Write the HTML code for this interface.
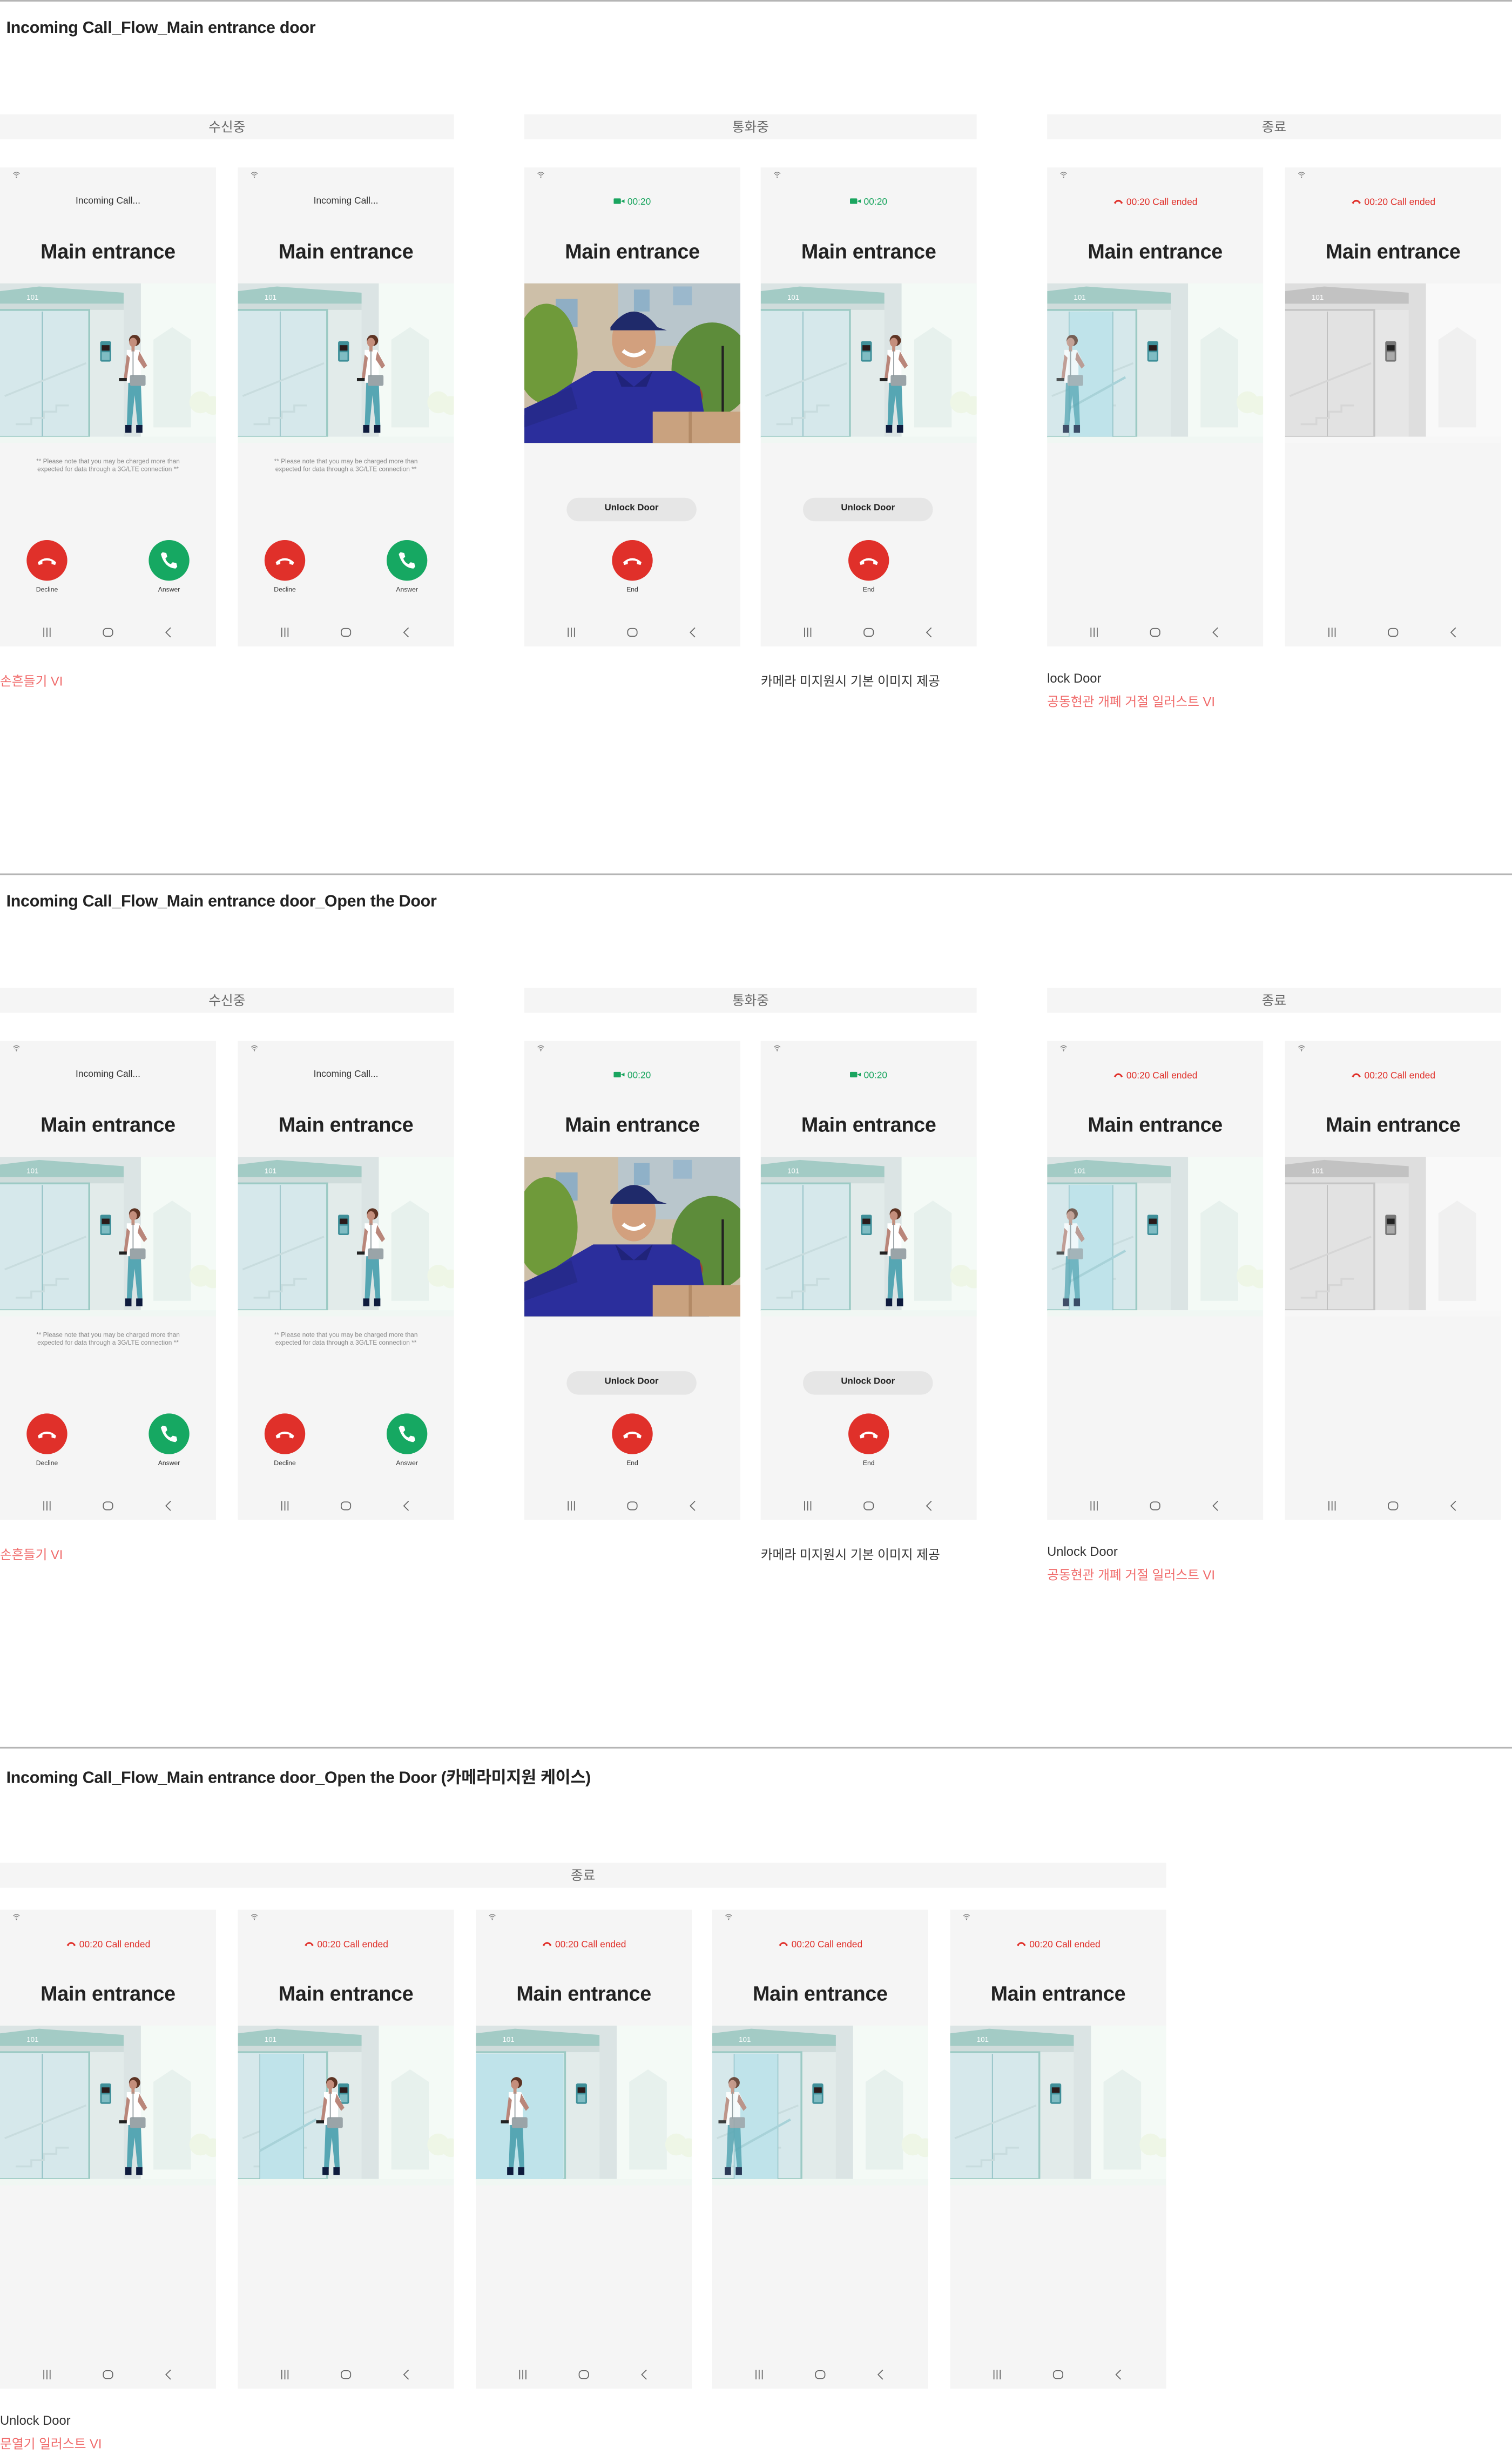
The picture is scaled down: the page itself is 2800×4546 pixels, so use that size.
<!DOCTYPE html>
<html><head><meta charset="utf-8">
<style>
html,body{margin:0;padding:0;background:#fff;}
body{width:2800px;height:4546px;overflow:hidden;position:relative;font-family:"Liberation Sans","Noto Sans CJK KR",sans-serif;}
#c{position:absolute;left:0;top:0;width:966px;height:1568px;transform:scale(2.8986);transform-origin:0 0;}
.sep{position:absolute;left:0;width:966px;height:0;border-top:0.5px solid #b5b5b5;}
.h{position:absolute;left:4px;font-size:10.5px;color:#222;font-weight:bold;white-space:nowrap;letter-spacing:-0.1px}
.band{position:absolute;height:16px;background:#f5f5f5;font-size:8.5px;color:#666;text-align:center;line-height:16px;}
.ph{position:absolute;width:138px;height:306px;background:#f5f5f5;overflow:hidden;}
.ph .wf{position:absolute;left:8px;top:2px;width:5px;height:5px}
.ph .tp{position:absolute;left:0;width:138px;top:19px;text-align:center;font-size:6px;color:#333;}
.ph .tp.g{color:#1aa55f}.ph .tp.r{color:#e0302a}
.ph .tt{position:absolute;left:0;width:138px;top:46px;text-align:center;font-size:13px;color:#222;font-weight:bold;letter-spacing:-0.1px}
.ph svg.im{position:absolute;left:0;top:74px;width:138px;height:102px}
.ph .nt{position:absolute;left:0;width:138px;top:186px;text-align:center;font-size:4.1px;color:#888;line-height:4.6px}
.ph .cb{position:absolute;width:26px;height:26px;border-radius:50%;top:238px}
.ph .cb svg{position:absolute;left:6px;top:6px;width:14px;height:14px}
.ph .lb{position:absolute;top:267px;width:40px;text-align:center;font-size:4.2px;color:#333}
.ph .pill{position:absolute;left:27px;top:211px;width:83px;height:15px;border-radius:8px;background:#e6e6e6;text-align:center;line-height:15px;font-size:5.8px;font-weight:bold;color:#222}
.red{background:#e0302a}.grn{background:#16a862}
.lab{position:absolute;font-size:8.2px;white-space:nowrap}
.lab.k{color:#333}.lab.rr{color:#f06a6a}
</style></head><body>
<svg width="0" height="0" style="position:absolute">
<defs>
<symbol id="man" viewBox="0 0 20 66">
<path d="M6 32h8l1 28h-3l-2-20-2 20H5z" fill="#56a6b3"/>
<rect x="4" y="59" width="4" height="5" fill="#0e1b3d"/><rect x="11" y="59" width="4" height="5" fill="#0e1b3d"/>
<path d="M5 11h8l3 6-2 1v14H5z" fill="#fff"/>
<path d="M13 12l5 9-2 2-4-6z" fill="#b9867a"/>
<rect x="8" y="2" width="2" height="10" fill="#c48e7c"/>
<circle cx="10" cy="5" r="3.6" fill="#5e3424"/><ellipse cx="9" cy="6.2" rx="2.5" ry="2.9" fill="#c48e7c"/>
<rect x="7" y="27" width="10" height="7" rx="1" fill="#9aa4a8"/>
<line x1="9" y1="11" x2="9" y2="28" stroke="#8a9498" stroke-width=".6"/>
<path d="M5 14l-2 16 2 0 2-14z" fill="#b9867a"/>
<rect x="0" y="29" width="5" height="2" fill="#222"/>
</symbol>
<symbol id="bg" viewBox="0 0 138 102">
<rect width="138" height="102" fill="#f4faf6"/>
<path d="M98 92V36l12-8 12 8v56z" fill="#e7f1ed"/>
<circle cx="128" cy="76" r="7" fill="#eef6e6"/><circle cx="136" cy="78" r="6" fill="#eef6e6"/>
<rect x="0" y="0" width="90" height="98" fill="#dbe4e4"/>
<path d="M0 5L25 2L79 6V13H0z" fill="#a3cbc5"/>
<rect x="0" y="13" width="79" height="4" fill="#cfdcdb"/>
<text x="17" y="10.5" font-size="4.6" fill="#fff" font-family="Liberation Sans,sans-serif">101</text>
<rect x="0" y="17" width="79" height="81" fill="#e2ebea"/>
<rect x="-1" y="17" width="58" height="81" fill="#d6e8eb" stroke="#9ccac4" stroke-width="1.2"/>
<line x1="27" y1="18" x2="27" y2="98" stroke="#8fbfc3" stroke-width=".6"/>
<path d="M3 72L55 51M10 90h10v-4h8v-4h8v-4h8" stroke="#c8dcde" stroke-width="1.2" fill="none"/>
<rect x="64" y="37" width="7" height="13" rx="1" fill="#3f8f99"/>
<rect x="65" y="39.5" width="5" height="3.5" fill="#2a1a1a"/>
<rect x="65" y="44" width="5" height="5" fill="#7fbcc3"/>
<rect x="0" y="98" width="138" height="4" fill="#f0f7f3"/>
</symbol>
<symbol id="bgg" viewBox="0 0 138 102">
<rect width="138" height="102" fill="#f9f9f9"/>
<path d="M98 92V36l12-8 12 8v56z" fill="#f0f0f0"/>
<rect x="0" y="0" width="90" height="98" fill="#dedede"/>
<path d="M0 5L25 2L79 6V13H0z" fill="#c2c2c2"/>
<text x="17" y="10.5" font-size="4.6" fill="#fff" font-family="Liberation Sans,sans-serif">101</text>
<rect x="0" y="17" width="79" height="81" fill="#e6e6e6"/>
<rect x="-1" y="17" width="58" height="81" fill="#e2e2e2" stroke="#c4c4c4" stroke-width="1.2"/>
<line x1="27" y1="18" x2="27" y2="98" stroke="#bbb" stroke-width=".6"/>
<path d="M3 72L55 51M10 90h10v-4h8v-4h8v-4h8" stroke="#d6d6d6" stroke-width="1.2" fill="none"/>
<rect x="64" y="37" width="7" height="13" rx="1" fill="#777"/>
<rect x="65" y="39.5" width="5" height="3.5" fill="#222"/>
<rect x="65" y="44" width="5" height="5" fill="#aaa"/>
<rect x="0" y="98" width="138" height="4" fill="#f7f7f7"/>
</symbol>
<symbol id="bgo" viewBox="0 0 138 102">
<use href="#bg" width="138" height="102"/>
<rect x="14" y="18" width="28" height="80" fill="#bfe3ea"/>
<line x1="14" y1="18" x2="14" y2="98" stroke="#8fbfc3" stroke-width=".5"/>
<line x1="42" y1="18" x2="42" y2="98" stroke="#8fbfc3" stroke-width=".5"/>
<path d="M14 80L50 60" stroke="#a8d2d8" stroke-width="1.5"/>
</symbol>
<symbol id="photo" viewBox="0 0 138 102">
<rect width="138" height="102" fill="#cdbfa8"/>
<rect x="60" y="0" width="78" height="40" fill="#b9c6cc"/>
<rect x="70" y="4" width="10" height="14" fill="#8fb1c8"/><rect x="95" y="2" width="12" height="12" fill="#9bb8cc"/>
<rect x="20" y="10" width="14" height="18" fill="#8faec4"/>
<ellipse cx="14" cy="45" rx="20" ry="32" fill="#6f9a3a"/>
<ellipse cx="120" cy="55" rx="26" ry="30" fill="#5d8c3a"/>
<ellipse cx="100" cy="72" rx="14" ry="10" fill="#a0472d"/>
<rect x="0" y="88" width="138" height="14" fill="#7db04a"/>
<rect x="126" y="40" width="1.5" height="50" fill="#222"/>
<path d="M0 84l30-20 14-8h52l16 10 6 36H0z" fill="#2b2e9c"/>
<path d="M0 80l30-14 4 14L0 92z" fill="#262a8c"/>
<path d="M58 56l12 10 12-10-4 10H62z" fill="#20237a"/>
<ellipse cx="70" cy="36" rx="14" ry="18" fill="#d2a07e"/>
<path d="M55 28q15-20 30 0l6 2H55z" fill="#1f2a6a"/>
<path d="M63 43q7 6 14 0" stroke="#fff" stroke-width="2.5" fill="none"/>
<rect x="82" y="82" width="56" height="20" fill="#c9a27f"/>
<rect x="105" y="82" width="2" height="20" fill="#b38a66"/>
</symbol>
<symbol id="wifi" viewBox="0 0 10 10"><path d="M1 4q4-4 8 0M2.5 5.5q2.5-2.5 5 0M4 7q1-1 2 0" stroke="#777" stroke-width=".9" fill="none"/><circle cx="5" cy="8.5" r=".7" fill="#777"/></symbol>
<symbol id="hang" viewBox="0 0 24 24"><path d="M2 14q10-9 20 0l-1 3-4-1v-3q-5-2-10 0v3l-4 1z" fill="#fff"/></symbol>
<symbol id="ans" viewBox="0 0 24 24"><path d="M5 3l4 1 1 4-2 2q2 5 6 6l2-2 4 1 1 4-2 2Q7 20 3 5z" fill="#fff"/></symbol>
<symbol id="cam" viewBox="0 0 12 8"><rect x="0" y="1" width="8" height="6" rx="1" fill="#1aa55f"/><path d="M8 4l4-2v4z" fill="#1aa55f"/></symbol>
<symbol id="hr" viewBox="0 0 12 8"><path d="M1 6q5-7 10 0l-2 1-1-2q-2-1-4 0l-1 2z" fill="#e0302a"/></symbol>
<symbol id="nav" viewBox="0 0 138 10"><path d="M28 2v6M30 2v6M32 2v6" stroke="#666" stroke-width=".6"/><rect x="66" y="2.5" width="6" height="5" rx="2" fill="none" stroke="#666" stroke-width=".6"/><path d="M109 2l-3 3 3 3" fill="none" stroke="#666" stroke-width=".6"/></symbol>
</defs></svg>

<div id="c">
<div class="sep" style="top:0"></div>
<div class="h" style="top:12px">Incoming Call_Flow_Main entrance door</div>
<div class="band" style="left:0;top:73px;width:290px">수신중</div>
<div class="band" style="left:335px;top:73px;width:289px">통화중</div>
<div class="band" style="left:669px;top:73px;width:290px">종료</div>

<!-- ROW 1 -->
<div class="ph" style="left:0;top:107px"><svg class="wf"><use href="#wifi" width="5" height="5"/></svg><div class="tp">Incoming Call...</div><div class="tt">Main entrance</div><svg class="im" viewBox="0 0 138 102"><use href="#bg" width="138" height="102"/><use href="#man" x="76" y="31" width="20" height="67"/></svg><div class="nt">** Please note that you may be charged more than<br>expected for data through a 3G/LTE connection **</div><div class="cb red" style="left:17px"><svg><use href="#hang" width="14" height="14"/></svg></div><div class="cb grn" style="left:95px"><svg><use href="#ans" width="14" height="14"/></svg></div><div class="lb" style="left:10px">Decline</div><div class="lb" style="left:88px">Answer</div><svg style="position:absolute;left:0;top:292px;width:138px;height:10px"><use href="#nav" width="138" height="10"/></svg></div>
<div class="ph" style="left:152px;top:107px"><svg class="wf"><use href="#wifi" width="5" height="5"/></svg><div class="tp">Incoming Call...</div><div class="tt">Main entrance</div><svg class="im" viewBox="0 0 138 102"><use href="#bg" width="138" height="102"/><use href="#man" x="76" y="31" width="20" height="67"/></svg><div class="nt">** Please note that you may be charged more than<br>expected for data through a 3G/LTE connection **</div><div class="cb red" style="left:17px"><svg><use href="#hang" width="14" height="14"/></svg></div><div class="cb grn" style="left:95px"><svg><use href="#ans" width="14" height="14"/></svg></div><div class="lb" style="left:10px">Decline</div><div class="lb" style="left:88px">Answer</div><svg style="position:absolute;left:0;top:292px;width:138px;height:10px"><use href="#nav" width="138" height="10"/></svg></div>
<div class="ph" style="left:335px;top:107px"><svg class="wf"><use href="#wifi" width="5" height="5"/></svg><div class="tp g"><svg style="width:7px;height:5px;vertical-align:-0.3px"><use href="#cam" width="7" height="5"/></svg> 00:20</div><div class="tt">Main entrance</div><svg class="im" viewBox="0 0 138 102"><use href="#photo" width="138" height="102"/></svg><div class="pill">Unlock Door</div><div class="cb red" style="left:56px"><svg><use href="#hang" width="14" height="14"/></svg></div><div class="lb" style="left:49px">End</div><svg style="position:absolute;left:0;top:292px;width:138px;height:10px"><use href="#nav" width="138" height="10"/></svg></div>
<div class="ph" style="left:486px;top:107px"><svg class="wf"><use href="#wifi" width="5" height="5"/></svg><div class="tp g"><svg style="width:7px;height:5px;vertical-align:-0.3px"><use href="#cam" width="7" height="5"/></svg> 00:20</div><div class="tt">Main entrance</div><svg class="im" viewBox="0 0 138 102"><use href="#bg" width="138" height="102"/><use href="#man" x="76" y="31" width="20" height="67"/></svg><div class="pill">Unlock Door</div><div class="cb red" style="left:56px"><svg><use href="#hang" width="14" height="14"/></svg></div><div class="lb" style="left:49px">End</div><svg style="position:absolute;left:0;top:292px;width:138px;height:10px"><use href="#nav" width="138" height="10"/></svg></div>
<div class="ph" style="left:669px;top:107px"><svg class="wf"><use href="#wifi" width="5" height="5"/></svg><div class="tp r"><svg style="width:7px;height:5px"><use href="#hr" width="7" height="5"/></svg> 00:20 Call ended</div><div class="tt">Main entrance</div><svg class="im" viewBox="0 0 138 102"><use href="#bgo" width="138" height="102"/><use href="#man" x="6" y="31" width="20" height="67" opacity=".75"/></svg><svg style="position:absolute;left:0;top:292px;width:138px;height:10px"><use href="#nav" width="138" height="10"/></svg></div>
<div class="ph" style="left:821px;top:107px"><svg class="wf"><use href="#wifi" width="5" height="5"/></svg><div class="tp r"><svg style="width:7px;height:5px"><use href="#hr" width="7" height="5"/></svg> 00:20 Call ended</div><div class="tt">Main entrance</div><svg class="im" viewBox="0 0 138 102"><use href="#bgg" width="138" height="102"/></svg><svg style="position:absolute;left:0;top:292px;width:138px;height:10px"><use href="#nav" width="138" height="10"/></svg></div>
<div class="lab rr" style="left:0;top:429px">손흔들기 VI</div>
<div class="lab k" style="left:486px;top:429px">카메라 미지원시 기본 이미지 제공</div>
<div class="lab k" style="left:669px;top:429px">lock Door</div>
<div class="lab rr" style="left:669px;top:442px">공동현관 개폐 거절 일러스트 VI</div>

<!-- ROW 2 -->
<div class="sep" style="top:558px"></div>
<div class="h" style="top:570px">Incoming Call_Flow_Main entrance door_Open the Door</div>
<div class="band" style="left:0;top:631px;width:290px">수신중</div>
<div class="band" style="left:335px;top:631px;width:289px">통화중</div>
<div class="band" style="left:669px;top:631px;width:290px">종료</div>
<div class="ph" style="left:0;top:665px"><svg class="wf"><use href="#wifi" width="5" height="5"/></svg><div class="tp">Incoming Call...</div><div class="tt">Main entrance</div><svg class="im" viewBox="0 0 138 102"><use href="#bg" width="138" height="102"/><use href="#man" x="76" y="31" width="20" height="67"/></svg><div class="nt">** Please note that you may be charged more than<br>expected for data through a 3G/LTE connection **</div><div class="cb red" style="left:17px"><svg><use href="#hang" width="14" height="14"/></svg></div><div class="cb grn" style="left:95px"><svg><use href="#ans" width="14" height="14"/></svg></div><div class="lb" style="left:10px">Decline</div><div class="lb" style="left:88px">Answer</div><svg style="position:absolute;left:0;top:292px;width:138px;height:10px"><use href="#nav" width="138" height="10"/></svg></div>
<div class="ph" style="left:152px;top:665px"><svg class="wf"><use href="#wifi" width="5" height="5"/></svg><div class="tp">Incoming Call...</div><div class="tt">Main entrance</div><svg class="im" viewBox="0 0 138 102"><use href="#bg" width="138" height="102"/><use href="#man" x="76" y="31" width="20" height="67"/></svg><div class="nt">** Please note that you may be charged more than<br>expected for data through a 3G/LTE connection **</div><div class="cb red" style="left:17px"><svg><use href="#hang" width="14" height="14"/></svg></div><div class="cb grn" style="left:95px"><svg><use href="#ans" width="14" height="14"/></svg></div><div class="lb" style="left:10px">Decline</div><div class="lb" style="left:88px">Answer</div><svg style="position:absolute;left:0;top:292px;width:138px;height:10px"><use href="#nav" width="138" height="10"/></svg></div>
<div class="ph" style="left:335px;top:665px"><svg class="wf"><use href="#wifi" width="5" height="5"/></svg><div class="tp g"><svg style="width:7px;height:5px;vertical-align:-0.3px"><use href="#cam" width="7" height="5"/></svg> 00:20</div><div class="tt">Main entrance</div><svg class="im" viewBox="0 0 138 102"><use href="#photo" width="138" height="102"/></svg><div class="pill">Unlock Door</div><div class="cb red" style="left:56px"><svg><use href="#hang" width="14" height="14"/></svg></div><div class="lb" style="left:49px">End</div><svg style="position:absolute;left:0;top:292px;width:138px;height:10px"><use href="#nav" width="138" height="10"/></svg></div>
<div class="ph" style="left:486px;top:665px"><svg class="wf"><use href="#wifi" width="5" height="5"/></svg><div class="tp g"><svg style="width:7px;height:5px;vertical-align:-0.3px"><use href="#cam" width="7" height="5"/></svg> 00:20</div><div class="tt">Main entrance</div><svg class="im" viewBox="0 0 138 102"><use href="#bg" width="138" height="102"/><use href="#man" x="76" y="31" width="20" height="67"/></svg><div class="pill">Unlock Door</div><div class="cb red" style="left:56px"><svg><use href="#hang" width="14" height="14"/></svg></div><div class="lb" style="left:49px">End</div><svg style="position:absolute;left:0;top:292px;width:138px;height:10px"><use href="#nav" width="138" height="10"/></svg></div>
<div class="ph" style="left:669px;top:665px"><svg class="wf"><use href="#wifi" width="5" height="5"/></svg><div class="tp r"><svg style="width:7px;height:5px"><use href="#hr" width="7" height="5"/></svg> 00:20 Call ended</div><div class="tt">Main entrance</div><svg class="im" viewBox="0 0 138 102"><use href="#bgo" width="138" height="102"/><use href="#man" x="6" y="31" width="20" height="67" opacity=".75"/></svg><svg style="position:absolute;left:0;top:292px;width:138px;height:10px"><use href="#nav" width="138" height="10"/></svg></div>
<div class="ph" style="left:821px;top:665px"><svg class="wf"><use href="#wifi" width="5" height="5"/></svg><div class="tp r"><svg style="width:7px;height:5px"><use href="#hr" width="7" height="5"/></svg> 00:20 Call ended</div><div class="tt">Main entrance</div><svg class="im" viewBox="0 0 138 102"><use href="#bgg" width="138" height="102"/></svg><svg style="position:absolute;left:0;top:292px;width:138px;height:10px"><use href="#nav" width="138" height="10"/></svg></div>
<div class="lab rr" style="left:0;top:987px">손흔들기 VI</div>
<div class="lab k" style="left:486px;top:987px">카메라 미지원시 기본 이미지 제공</div>
<div class="lab k" style="left:669px;top:987px">Unlock Door</div>
<div class="lab rr" style="left:669px;top:1000px">공동현관 개폐 거절 일러스트 VI</div>

<!-- ROW 3 -->
<div class="sep" style="top:1116px"></div>
<div class="h" style="top:1128px">Incoming Call_Flow_Main entrance door_Open the Door (카메라미지원 케이스)</div>
<div class="band" style="left:0;top:1190px;width:745px">종료</div>
<div class="ph" style="left:0;top:1220px"><svg class="wf"><use href="#wifi" width="5" height="5"/></svg><div class="tp r"><svg style="width:7px;height:5px"><use href="#hr" width="7" height="5"/></svg> 00:20 Call ended</div><div class="tt">Main entrance</div><svg class="im" viewBox="0 0 138 102"><use href="#bg" width="138" height="102"/><use href="#man" x="76" y="31" width="20" height="67"/></svg><svg style="position:absolute;left:0;top:292px;width:138px;height:10px"><use href="#nav" width="138" height="10"/></svg></div>
<div class="ph" style="left:152px;top:1220px"><svg class="wf"><use href="#wifi" width="5" height="5"/></svg><div class="tp r"><svg style="width:7px;height:5px"><use href="#hr" width="7" height="5"/></svg> 00:20 Call ended</div><div class="tt">Main entrance</div><svg class="im" viewBox="0 0 138 102"><use href="#bgo" width="138" height="102"/><use href="#man" x="50" y="31" width="20" height="67"/></svg><svg style="position:absolute;left:0;top:292px;width:138px;height:10px"><use href="#nav" width="138" height="10"/></svg></div>
<div class="ph" style="left:304px;top:1220px"><svg class="wf"><use href="#wifi" width="5" height="5"/></svg><div class="tp r"><svg style="width:7px;height:5px"><use href="#hr" width="7" height="5"/></svg> 00:20 Call ended</div><div class="tt">Main entrance</div><svg class="im" viewBox="0 0 138 102"><use href="#bgo" width="138" height="102"/><rect x="0" y="18" width="56" height="80" fill="#bfe3ea"/><use href="#man" x="16" y="31" width="20" height="67"/></svg><svg style="position:absolute;left:0;top:292px;width:138px;height:10px"><use href="#nav" width="138" height="10"/></svg></div>
<div class="ph" style="left:455px;top:1220px"><svg class="wf"><use href="#wifi" width="5" height="5"/></svg><div class="tp r"><svg style="width:7px;height:5px"><use href="#hr" width="7" height="5"/></svg> 00:20 Call ended</div><div class="tt">Main entrance</div><svg class="im" viewBox="0 0 138 102"><use href="#bgo" width="138" height="102"/><use href="#man" x="4" y="31" width="20" height="67" opacity=".85"/></svg><svg style="position:absolute;left:0;top:292px;width:138px;height:10px"><use href="#nav" width="138" height="10"/></svg></div>
<div class="ph" style="left:607px;top:1220px"><svg class="wf"><use href="#wifi" width="5" height="5"/></svg><div class="tp r"><svg style="width:7px;height:5px"><use href="#hr" width="7" height="5"/></svg> 00:20 Call ended</div><div class="tt">Main entrance</div><svg class="im" viewBox="0 0 138 102"><use href="#bg" width="138" height="102"/></svg><svg style="position:absolute;left:0;top:292px;width:138px;height:10px"><use href="#nav" width="138" height="10"/></svg></div>
<div class="lab k" style="left:0;top:1542px">Unlock Door</div>
<div class="lab rr" style="left:0;top:1555px">문열기 일러스트 VI</div>
</div>
</body></html>
